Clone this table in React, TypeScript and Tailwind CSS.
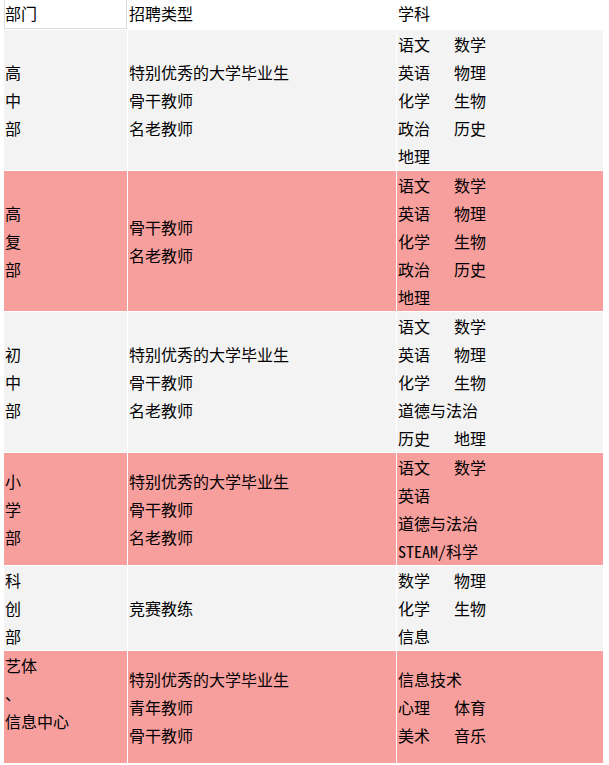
import React from 'react';

interface Row {
  dept: string[];
  types: string[];
  subjects: string[][];
  pink: boolean;
  lines: number;
}

const rows: Row[] = [
  {
    dept: ['高', '中', '部'],
    types: ['特别优秀的大学毕业生', '骨干教师', '名老教师'],
    subjects: [['语文', '数学'], ['英语', '物理'], ['化学', '生物'], ['政治', '历史'], ['地理']],
    pink: false,
    lines: 5,
  },
  {
    dept: ['高', '复', '部'],
    types: ['骨干教师', '名老教师'],
    subjects: [['语文', '数学'], ['英语', '物理'], ['化学', '生物'], ['政治', '历史'], ['地理']],
    pink: true,
    lines: 5,
  },
  {
    dept: ['初', '中', '部'],
    types: ['特别优秀的大学毕业生', '骨干教师', '名老教师'],
    subjects: [['语文', '数学'], ['英语', '物理'], ['化学', '生物'], ['道德与法治'], ['历史', '地理']],
    pink: false,
    lines: 5,
  },
  {
    dept: ['小', '学', '部'],
    types: ['特别优秀的大学毕业生', '骨干教师', '名老教师'],
    subjects: [['语文', '数学'], ['英语'], ['道德与法治'], ['STEAM/科学']],
    pink: true,
    lines: 4,
  },
  {
    dept: ['科', '创', '部'],
    types: ['竞赛教练'],
    subjects: [['数学', '物理'], ['化学', '生物'], ['信息']],
    pink: false,
    lines: 3,
  },
  {
    dept: ['艺体', '、', '信息中心', '\u00a0'],
    types: ['特别优秀的大学毕业生', '青年教师', '骨干教师'],
    subjects: [['信息技术'], ['心理', '体育'], ['美术', '音乐']],
    pink: true,
    lines: 4,
  },
];

const heights: Record<number, string> = {
  3: 'h-[84px]',
  4: 'h-[112px]',
  5: 'h-[140px]',
};

function Cell({ pink, h, children }: { pink: boolean; h: string; children: React.ReactNode }) {
  return (
    <div className={`${pink ? 'bg-[#f79f9d]' : 'bg-[#f3f3f3]'} ${h} flex flex-col justify-center pl-px`}>
      {children}
    </div>
  );
}

export default function App() {
  return (
    <div className="min-h-screen bg-white text-black text-base leading-7 font-['Noto_Sans_Mono_CJK_SC','Noto_Sans_CJK_SC',sans-serif]">
      <div className="ml-1 grid grid-cols-[123px_268px_206px] gap-px">
        <div className="h-[29px] border-x border-b border-[#dcdcdc] leading-[26px]">部门</div>
        <div className="h-[29px] pl-px leading-[26px]">招聘类型</div>
        <div className="h-[29px] pl-px leading-[26px]">学科</div>

        {rows.map((row, i) => {
          const h = heights[row.lines];
          return (
            <React.Fragment key={i}>
              <Cell pink={row.pink} h={h}>
                {row.dept.map((d, j) => (
                  <div key={j}>{d}</div>
                ))}
              </Cell>
              <Cell pink={row.pink} h={h}>
                {row.types.map((t, j) => (
                  <div key={j}>{t}</div>
                ))}
              </Cell>
              <Cell pink={row.pink} h={h}>
                {row.subjects.map((s, j) => (
                  <div key={j} className="flex whitespace-nowrap">
                    {s.map((sub, k) => (
                      <span key={k} className={s.length > 1 && k === 0 ? 'w-14' : ''}>
                        {sub}
                      </span>
                    ))}
                  </div>
                ))}
              </Cell>
            </React.Fragment>
          );
        })}
      </div>
    </div>
  );
}
